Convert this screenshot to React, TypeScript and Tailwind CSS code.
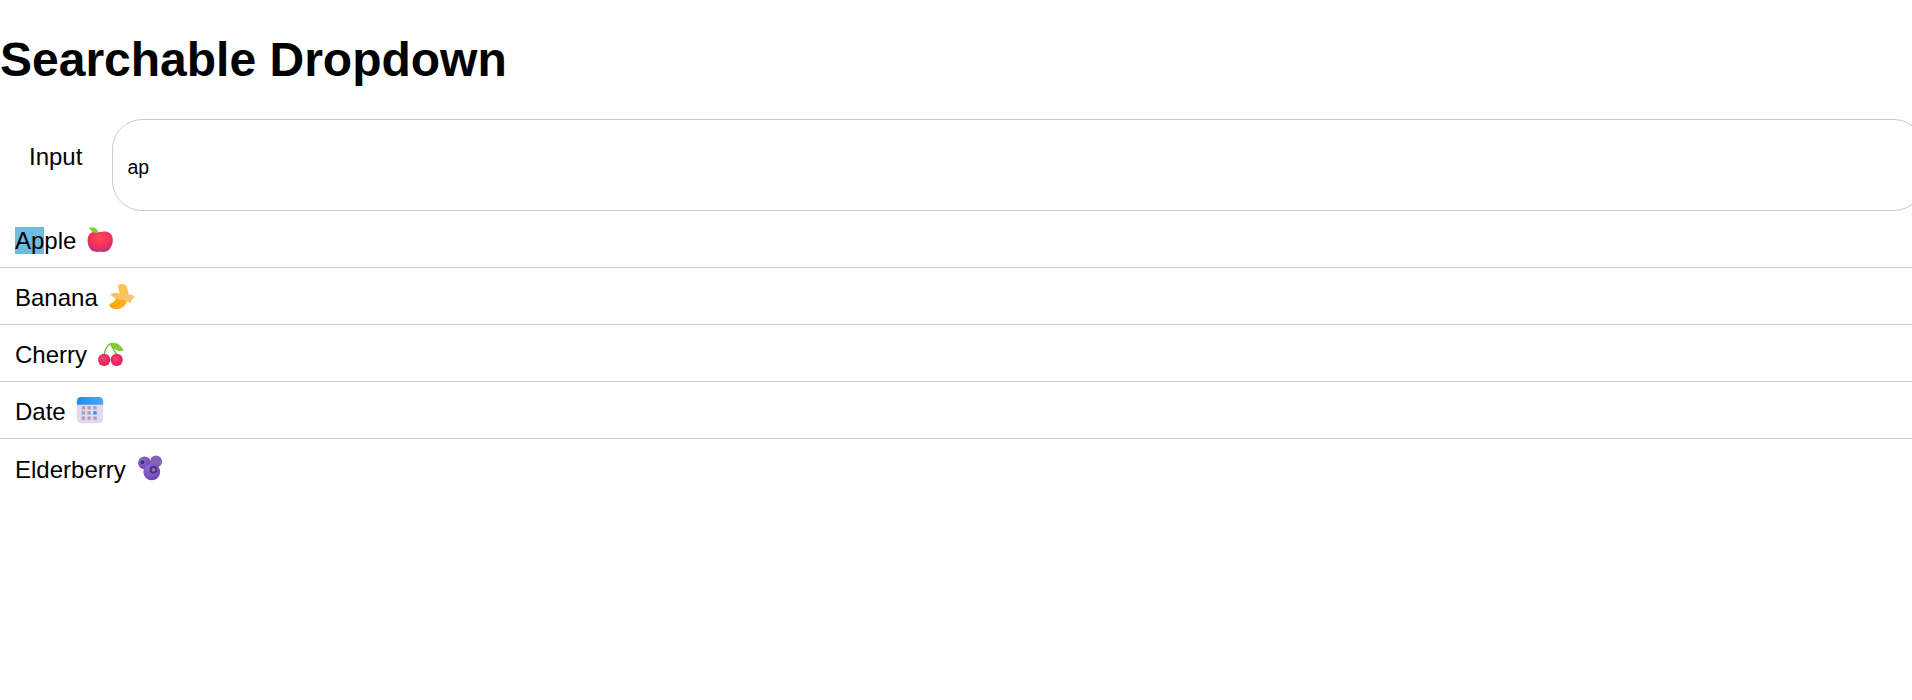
import React from "react";

function Apple() {
  return (
    <svg viewBox="0 0 32 32" className="ml-[10px] h-[28px] w-[28px] shrink-0">
      <defs>
        <radialGradient id="appleBody" cx="50%" cy="30%" r="78%">
          <stop offset="0%" stopColor="#ff4a58" />
          <stop offset="55%" stopColor="#ee3158" />
          <stop offset="100%" stopColor="#a5358f" />
        </radialGradient>
      </defs>
      <path d="M16 8C22 6.4 28 7.5 30 13C32 19 29 26.5 25 29.5C21.5 31.6 18.5 30.6 16 30.6C13.5 30.6 10.5 31.6 7 29.5C3 26.5 0.5 19 2.5 13C4.5 7.5 10 6.4 16 8Z" fill="url(#appleBody)" />
      <path d="M3.5 3.2C7.5 1.6 12 2.2 14.5 9C10 9.6 6 8.2 3.5 3.2Z" fill="#86c83a" />
    </svg>
  );
}

function Banana() {
  return (
    <svg viewBox="0 0 32 32" className="ml-[10px] h-[28px] w-[28px] shrink-0">
      <path d="M1 25C5 25 9 21 11 15L22 16C23 24 18 31 10 31C6 31 2 29.5 1 25Z" fill="#fcb016" />
      <path d="M2.5 27.5C8 28.5 13 25.5 16 20.5" fill="none" stroke="#e88f0a" strokeWidth="1" />
      <path d="M14 13.5C10 11.5 6 12 2.5 14C6 18 10 21 15.5 20.5C17.5 19 16.5 15 14 13.5Z" fill="#fbbf72" />
      <path d="M11.5 3.5C15 1.5 19.5 2 21 4.5C23 9 24 14 24 19L16 21C14 16 11.5 9 11.5 3.5Z" fill="#fcc550" />
      <path d="M20 14C24 14 28 14.5 31 17C28.5 18.5 27 20 26 24C23 23 19 21 18 18.5Z" fill="#fbc27a" />
    </svg>
  );
}

function Cherry() {
  return (
    <svg viewBox="0 0 32 32" className="ml-[10px] h-[28px] w-[28px] shrink-0">
      <defs>
        <radialGradient id="cherryFruit" cx="45%" cy="40%" r="65%">
          <stop offset="0%" stopColor="#ff3f74" />
          <stop offset="100%" stopColor="#d81a58" />
        </radialGradient>
      </defs>
      <path d="M8.2 18C9 12 12 7.5 15.5 5.2C17 10 20.5 14 22.5 18" fill="none" stroke="#7cb82f" strokeWidth="1.5" />
      <path d="M15 5C20 2.6 27 5.6 30.5 13C25 15 18 12 15 5Z" fill="#86c83a" />
      <circle cx="8.2" cy="23.8" r="7" fill="url(#cherryFruit)" />
      <circle cx="22.5" cy="23.8" r="7" fill="url(#cherryFruit)" />
    </svg>
  );
}

function Calendar() {
  const cols = [8.5, 15, 21.7];
  const rows = [13.5, 19.3, 25.3];
  return (
    <svg viewBox="0 0 32 32" className="ml-[10px] h-[28px] w-[28px] shrink-0">
      <defs>
        <linearGradient id="calTop" x1="0" y1="0" x2="1" y2="0">
          <stop offset="0%" stopColor="#1f8bf5" />
          <stop offset="100%" stopColor="#49a6fa" />
        </linearGradient>
      </defs>
      <rect x="1" y="1" width="30" height="30" rx="5" fill="#e2d9f0" />
      <path d="M1 10V6A5 5 0 0 1 6 1H26A5 5 0 0 1 31 6V10Z" fill="url(#calTop)" />
      {rows.map((y) =>
        cols.map((x) => (
          <rect
            key={`${x}-${y}`}
            x={x - 1.9}
            y={y - 1.9}
            width="3.8"
            height="3.8"
            fill={x === 21.7 && y === 19.3 ? "#2f8ff5" : "#aaa0b8"}
          />
        ))
      )}
    </svg>
  );
}

function Berries() {
  return (
    <svg viewBox="0 0 32 32" className="ml-[10px] h-[28px] w-[28px] shrink-0">
      <defs>
        <radialGradient id="berryFruit" cx="35%" cy="30%" r="80%">
          <stop offset="0%" stopColor="#8d6cd0" />
          <stop offset="100%" stopColor="#6c42ae" />
        </radialGradient>
      </defs>
      <circle cx="22.9" cy="8.6" r="6.9" fill="#8464b4" />
      <circle cx="9.6" cy="10" r="7.2" fill="url(#berryFruit)" />
      <circle cx="7.3" cy="9.3" r="2.2" fill="#453070" />
      <circle cx="18" cy="20.5" r="9.6" fill="url(#berryFruit)" />
      <circle cx="19.9" cy="17.9" r="4.3" fill="#4c2f78" />
      <circle cx="20.1" cy="18.1" r="2.2" fill="#8f7aab" />
    </svg>
  );
}

const fruits = [
  { name: "Banana", icon: <Banana /> },
  { name: "Cherry", icon: <Cherry /> },
  { name: "Date", icon: <Calendar /> },
  { name: "Elderberry", icon: <Berries /> },
];

export default function App() {
  return (
    <div className="overflow-hidden font-['Liberation_Sans',Arial,sans-serif] text-black">
      <h1 className="mt-[32px] mb-[32px] text-[48px] font-bold leading-[55px]">Searchable Dropdown</h1>
      <div className="flex items-start">
        <label className="pl-[29px] pr-[30px] pt-[24px] text-[24px] leading-[28px]">Input</label>
        <input
          readOnly
          value="ap"
          className="h-[92px] w-[1812px] shrink-0 rounded-[30px] border border-[#ccc] px-[14px] pt-[5px] text-[19.5px] outline-none"
        />
      </div>
      <ul>
        <li className="flex h-[57px] items-center border-b border-[#ccc] px-[15px] text-[24px] leading-[28px]">
          <span className="pt-[4px]">
            <mark className="bg-[#6cbbe3] text-black">Ap</mark>ple
          </span>
          <Apple />
        </li>
        {fruits.map((f) => (
          <li
            key={f.name}
            className="flex h-[57px] items-center border-b border-[#ccc] px-[15px] text-[24px] leading-[28px] last:border-b-0"
          >
            <span className="pt-[4px]">{f.name}</span>
            {f.icon}
          </li>
        ))}
      </ul>
    </div>
  );
}
